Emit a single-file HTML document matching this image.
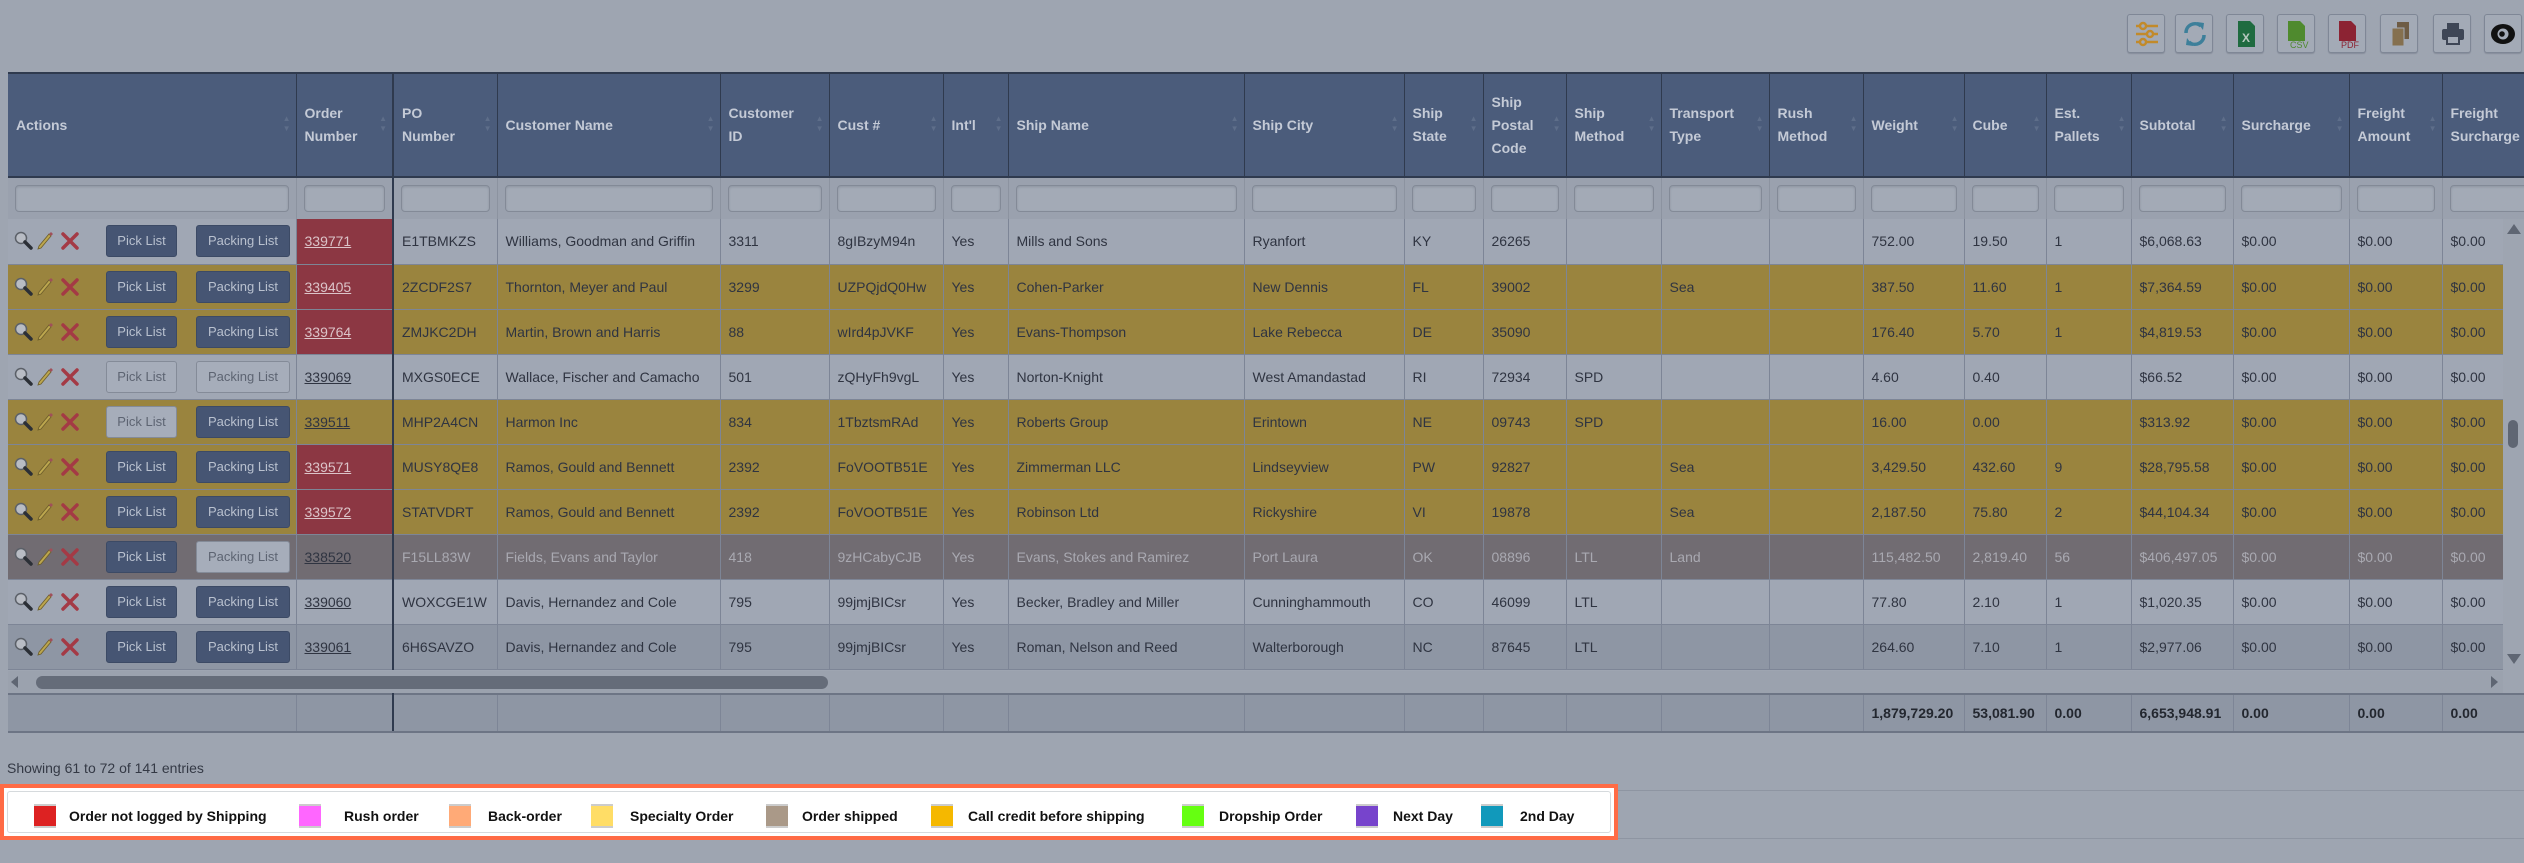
<!DOCTYPE html>
<html><head><meta charset="utf-8">
<style>
*{box-sizing:border-box;margin:0;padding:0}
body{width:2524px;height:863px;background:#9ea5b1;font-family:"Liberation Sans",Arial,sans-serif;position:relative;overflow:hidden;color:#2f3441}
.tb{position:absolute;top:14px;width:38px;height:39px;border:1px solid #7f8796;border-radius:3px;background:#a3aab6;box-shadow:0 1px 1px #868d9a}
.tb svg{position:absolute;left:5px;top:5px}
table{border-collapse:collapse;table-layout:fixed;width:2560px}
th{background:#4b5c7b;color:#c4cad6;font-size:14px;font-weight:bold;text-align:left;padding:0 8px;height:103px;line-height:23px;border-right:1px solid #2f3a4e;border-bottom:2px solid #2f3a4e;position:relative}
th:after{content:"▲\A▼";white-space:pre;position:absolute;right:5px;top:40px;font-size:8px;line-height:10px;color:#5e6e8a}
tr.f td{background:#9aa1ae;height:42px;padding:0 7px;border-right:1px solid #8c93a0}
tr.f td div{height:27px;border:1px solid #838a97;border-radius:4px;background:#a3aab6;box-shadow:inset 0 1px 2px #8d94a1}
tr.r td{height:45px;font-size:14px;padding:0 8px;border-right:1px solid #7d8596;border-bottom:1px solid #7d8596;white-space:nowrap;overflow:hidden}
tr.r td:first-child{padding:0 0 0 6px}
tr.w td{background:#a0a7b4}
tr.y td{background:#9a843e}
tr.g td{background:#716c72;color:#a9a9b1}
tr.d td{background:#8e96a4}
td.red{background:#8c3743!important}
td.red a{color:#dcc4c9}
a{color:#2f3441;text-decoration:underline}
.ic{display:inline-block;vertical-align:middle;width:74px;height:24px}
.btn{display:inline-block;vertical-align:middle;height:32px;line-height:30px;border-radius:3px;background:#465573;color:#b9c1cf;font-size:13px;text-align:center;border:1px solid #3c4a65}
.btn.l{background:#a6adba;color:#5d6472;border-color:#848b98}
.bp{width:71px;margin-left:18px}.bk{width:94px;margin-left:19px}
tr.ft td{background:#8e96a4;height:38px;font-size:14px;font-weight:bold;padding:0 8px;border-right:1px solid #7d8596;border-top:2px solid #6d7585;border-bottom:2px solid #6d7585;color:#23272f}
.c1{border-right:2px solid #2f3a4e!important}
.legend{position:absolute;left:0;top:784px;width:1618px;height:56px;border:4px solid #ff6b45;background:#fff}
.legend .in{position:absolute;left:3px;top:3px;right:3px;bottom:3px;border:1px solid #d6dadd;border-radius:3px}
.li{position:absolute;top:16px;height:24px;font-size:14px;font-weight:bold;color:#111;line-height:24px}
.li i{position:absolute;left:0;top:0;width:22px;height:24px;border-top:2px solid #ccc;border-bottom:2px solid #ccc}
.li span{position:absolute;white-space:nowrap}
</style></head><body>

<div class="tb" style="left:2127px"><svg width="28" height="28"><g stroke="#c28a2a" stroke-width="2.5" fill="none"><line x1="3" y1="6" x2="25" y2="6"/><line x1="3" y1="14" x2="25" y2="14"/><line x1="3" y1="22" x2="25" y2="22"/><circle cx="10" cy="6" r="3" fill="#a3aab6"/><circle cx="17" cy="14" r="3" fill="#a3aab6"/><circle cx="10" cy="22" r="3" fill="#a3aab6"/></g></svg></div>
<div class="tb" style="left:2175px"><svg width="28" height="28"><g stroke="#3d7f9a" stroke-width="3.5" fill="none"><path d="M5 13a9 9 0 0 1 15-7"/><path d="M23 15a9 9 0 0 1-15 7"/></g><path d="M16 2l7 1-1 7z" fill="#3d7f9a"/><path d="M12 26l-7-1 1-7z" fill="#3d7f9a"/></svg></div>
<div class="tb" style="left:2226px"><svg width="28" height="28"><path d="M6 1h12l5 5v21H6z" fill="#1f6b40"/><text x="10" y="22" font-size="12" font-weight="bold" fill="#b8c8c0" font-family="Liberation Sans">X</text></svg></div>
<div class="tb" style="left:2277px"><svg width="28" height="28"><path d="M5 1h12l5 5v15H5z" fill="#4f8a2e"/><text x="7" y="28" font-size="9" fill="#4f8a2e" font-family="Liberation Sans">CSV</text></svg></div>
<div class="tb" style="left:2328px"><svg width="28" height="28"><path d="M5 1h12l5 5v15H5z" fill="#8c2333"/><text x="7" y="28" font-size="9" fill="#8c2333" font-family="Liberation Sans">PDF</text></svg></div>
<div class="tb" style="left:2380px"><svg width="28" height="28"><rect x="11" y="2" width="12" height="17" fill="#6e5c45"/><rect x="6" y="8" width="12" height="18" fill="#85704f" stroke="#a3aab6"/></svg></div>
<div class="tb" style="left:2433px"><svg width="28" height="28"><rect x="8" y="3" width="12" height="6" fill="#3e4656"/><rect x="3" y="9" width="22" height="11" rx="2" fill="#3e4656"/><rect x="8" y="16" width="12" height="8" fill="#a3aab6" stroke="#3e4656" stroke-width="2"/></svg></div>
<div class="tb" style="left:2484px"><svg width="28" height="28"><ellipse cx="13" cy="14" rx="12" ry="10" fill="#111"/><circle cx="13" cy="14" r="5.5" fill="#a3aab6"/><circle cx="12" cy="14" r="2.8" fill="#111"/></svg></div>

<div style="position:absolute;left:8px;top:72px;width:2516px;height:147px;overflow:hidden;border-top:2px solid #2f3a4e">
<table>
<colgroup><col style="width:288px"><col style="width:97px"><col style="width:104px"><col style="width:223px"><col style="width:109px"><col style="width:114px"><col style="width:65px"><col style="width:236px"><col style="width:160px"><col style="width:79px"><col style="width:83px"><col style="width:95px"><col style="width:108px"><col style="width:94px"><col style="width:101px"><col style="width:82px"><col style="width:85px"><col style="width:102px"><col style="width:116px"><col style="width:93px"><col style="width:130px"></colgroup>
<tr><th>Actions</th><th class="c1">Order<br>Number</th><th>PO<br>Number</th><th>Customer Name</th><th>Customer<br>ID</th><th>Cust #</th><th>Int'l</th><th>Ship Name</th><th>Ship City</th><th>Ship<br>State</th><th>Ship<br>Postal<br>Code</th><th>Ship<br>Method</th><th>Transport<br>Type</th><th>Rush<br>Method</th><th>Weight</th><th>Cube</th><th>Est.<br>Pallets</th><th>Subtotal</th><th>Surcharge</th><th>Freight<br>Amount</th><th>Freight<br>Surcharge</th></tr>
<tr class="f"><td><div></div></td><td class="c1"><div></div></td><td><div></div></td><td><div></div></td><td><div></div></td><td><div></div></td><td><div></div></td><td><div></div></td><td><div></div></td><td><div></div></td><td><div></div></td><td><div></div></td><td><div></div></td><td><div></div></td><td><div></div></td><td><div></div></td><td><div></div></td><td><div></div></td><td><div></div></td><td><div></div></td><td><div></div></td></tr>
</table>
</div>

<svg width="0" height="0" style="position:absolute"><defs><g id="icn"><circle cx="7" cy="9" r="5.5" fill="#b8bcc4" stroke="#5b6068" stroke-width="1.5"/><line x1="11" y1="13" x2="17" y2="19" stroke="#2b2f36" stroke-width="3.5" stroke-linecap="round"/><path d="M24 20l3-1 10-12-2-2-10 12z" fill="#bca64e" stroke="#6c5d2a" stroke-width="0.8"/><path d="M35 5l2-2 2 2-2 2z" fill="#a0505a"/><path d="M49 5l14 14M63 5L49 19" stroke="#a43a45" stroke-width="3.5" stroke-linecap="round"/></g></defs></svg>

<div style="position:absolute;left:8px;top:219px;width:2495px;height:452px;overflow:hidden">
<table>
<colgroup><col style="width:288px"><col style="width:97px"><col style="width:104px"><col style="width:223px"><col style="width:109px"><col style="width:114px"><col style="width:65px"><col style="width:236px"><col style="width:160px"><col style="width:79px"><col style="width:83px"><col style="width:95px"><col style="width:108px"><col style="width:94px"><col style="width:101px"><col style="width:82px"><col style="width:85px"><col style="width:102px"><col style="width:116px"><col style="width:93px"><col style="width:130px"></colgroup>
<tr class="r w"><td><svg class="ic"><use href="#icn"/></svg><span class="btn bp">Pick List</span><span class="btn bk">Packing List</span></td><td class="c1 red"><a>339771</a></td><td>E1TBMKZS</td><td>Williams, Goodman and Griffin</td><td>3311</td><td>8gIBzyM94n</td><td>Yes</td><td>Mills and Sons</td><td>Ryanfort</td><td>KY</td><td>26265</td><td></td><td></td><td></td><td>752.00</td><td>19.50</td><td>1</td><td>$6,068.63</td><td>$0.00</td><td>$0.00</td><td>$0.00</td></tr>
<tr class="r y"><td><svg class="ic"><use href="#icn"/></svg><span class="btn bp">Pick List</span><span class="btn bk">Packing List</span></td><td class="c1 red"><a>339405</a></td><td>2ZCDF2S7</td><td>Thornton, Meyer and Paul</td><td>3299</td><td>UZPQjdQ0Hw</td><td>Yes</td><td>Cohen-Parker</td><td>New Dennis</td><td>FL</td><td>39002</td><td></td><td>Sea</td><td></td><td>387.50</td><td>11.60</td><td>1</td><td>$7,364.59</td><td>$0.00</td><td>$0.00</td><td>$0.00</td></tr>
<tr class="r y"><td><svg class="ic"><use href="#icn"/></svg><span class="btn bp">Pick List</span><span class="btn bk">Packing List</span></td><td class="c1 red"><a>339764</a></td><td>ZMJKC2DH</td><td>Martin, Brown and Harris</td><td>88</td><td>wIrd4pJVKF</td><td>Yes</td><td>Evans-Thompson</td><td>Lake Rebecca</td><td>DE</td><td>35090</td><td></td><td></td><td></td><td>176.40</td><td>5.70</td><td>1</td><td>$4,819.53</td><td>$0.00</td><td>$0.00</td><td>$0.00</td></tr>
<tr class="r w"><td><svg class="ic"><use href="#icn"/></svg><span class="btn bp l">Pick List</span><span class="btn bk l">Packing List</span></td><td class="c1"><a>339069</a></td><td>MXGS0ECE</td><td>Wallace, Fischer and Camacho</td><td>501</td><td>zQHyFh9vgL</td><td>Yes</td><td>Norton-Knight</td><td>West Amandastad</td><td>RI</td><td>72934</td><td>SPD</td><td></td><td></td><td>4.60</td><td>0.40</td><td></td><td>$66.52</td><td>$0.00</td><td>$0.00</td><td>$0.00</td></tr>
<tr class="r y"><td><svg class="ic"><use href="#icn"/></svg><span class="btn bp l">Pick List</span><span class="btn bk">Packing List</span></td><td class="c1"><a>339511</a></td><td>MHP2A4CN</td><td>Harmon Inc</td><td>834</td><td>1TbztsmRAd</td><td>Yes</td><td>Roberts Group</td><td>Erintown</td><td>NE</td><td>09743</td><td>SPD</td><td></td><td></td><td>16.00</td><td>0.00</td><td></td><td>$313.92</td><td>$0.00</td><td>$0.00</td><td>$0.00</td></tr>
<tr class="r y"><td><svg class="ic"><use href="#icn"/></svg><span class="btn bp">Pick List</span><span class="btn bk">Packing List</span></td><td class="c1 red"><a>339571</a></td><td>MUSY8QE8</td><td>Ramos, Gould and Bennett</td><td>2392</td><td>FoVOOTB51E</td><td>Yes</td><td>Zimmerman LLC</td><td>Lindseyview</td><td>PW</td><td>92827</td><td></td><td>Sea</td><td></td><td>3,429.50</td><td>432.60</td><td>9</td><td>$28,795.58</td><td>$0.00</td><td>$0.00</td><td>$0.00</td></tr>
<tr class="r y"><td><svg class="ic"><use href="#icn"/></svg><span class="btn bp">Pick List</span><span class="btn bk">Packing List</span></td><td class="c1 red"><a>339572</a></td><td>STATVDRT</td><td>Ramos, Gould and Bennett</td><td>2392</td><td>FoVOOTB51E</td><td>Yes</td><td>Robinson Ltd</td><td>Rickyshire</td><td>VI</td><td>19878</td><td></td><td>Sea</td><td></td><td>2,187.50</td><td>75.80</td><td>2</td><td>$44,104.34</td><td>$0.00</td><td>$0.00</td><td>$0.00</td></tr>
<tr class="r g"><td><svg class="ic"><use href="#icn"/></svg><span class="btn bp">Pick List</span><span class="btn bk l">Packing List</span></td><td class="c1"><a>338520</a></td><td>F15LL83W</td><td>Fields, Evans and Taylor</td><td>418</td><td>9zHCabyCJB</td><td>Yes</td><td>Evans, Stokes and Ramirez</td><td>Port Laura</td><td>OK</td><td>08896</td><td>LTL</td><td>Land</td><td></td><td>115,482.50</td><td>2,819.40</td><td>56</td><td>$406,497.05</td><td>$0.00</td><td>$0.00</td><td>$0.00</td></tr>
<tr class="r w"><td><svg class="ic"><use href="#icn"/></svg><span class="btn bp">Pick List</span><span class="btn bk">Packing List</span></td><td class="c1"><a>339060</a></td><td>WOXCGE1W</td><td>Davis, Hernandez and Cole</td><td>795</td><td>99jmjBICsr</td><td>Yes</td><td>Becker, Bradley and Miller</td><td>Cunninghammouth</td><td>CO</td><td>46099</td><td>LTL</td><td></td><td></td><td>77.80</td><td>2.10</td><td>1</td><td>$1,020.35</td><td>$0.00</td><td>$0.00</td><td>$0.00</td></tr>
<tr class="r d"><td><svg class="ic"><use href="#icn"/></svg><span class="btn bp">Pick List</span><span class="btn bk">Packing List</span></td><td class="c1"><a>339061</a></td><td>6H6SAVZO</td><td>Davis, Hernandez and Cole</td><td>795</td><td>99jmjBICsr</td><td>Yes</td><td>Roman, Nelson and Reed</td><td>Walterborough</td><td>NC</td><td>87645</td><td>LTL</td><td></td><td></td><td>264.60</td><td>7.10</td><td>1</td><td>$2,977.06</td><td>$0.00</td><td>$0.00</td><td>$0.00</td></tr>
</table>
</div>

<div style="position:absolute;left:2503px;top:219px;width:21px;height:452px;background:#9ea5b1"></div>
<div style="position:absolute;left:2507px;top:224px;width:0;height:0;border-left:7px solid transparent;border-right:7px solid transparent;border-bottom:10px solid #5f6673"></div>
<div style="position:absolute;left:2508px;top:420px;width:10px;height:28px;border-radius:5px;background:#5f6673"></div>
<div style="position:absolute;left:2507px;top:654px;width:0;height:0;border-left:7px solid transparent;border-right:7px solid transparent;border-top:10px solid #5f6673"></div>
<div style="position:absolute;left:8px;top:671px;width:2495px;height:22px;background:#9ba2ae"></div>
<div style="position:absolute;left:11px;top:676px;width:0;height:0;border-top:6px solid transparent;border-bottom:6px solid transparent;border-right:7px solid #5f6673"></div>
<div style="position:absolute;left:36px;top:676px;width:792px;height:13px;border-radius:7px;background:#656c79"></div>
<div style="position:absolute;left:2491px;top:676px;width:0;height:0;border-top:6px solid transparent;border-bottom:6px solid transparent;border-left:7px solid #5f6673"></div>

<div style="position:absolute;left:8px;top:693px;width:2516px;height:42px;overflow:hidden">
<table>
<colgroup><col style="width:288px"><col style="width:97px"><col style="width:104px"><col style="width:223px"><col style="width:109px"><col style="width:114px"><col style="width:65px"><col style="width:236px"><col style="width:160px"><col style="width:79px"><col style="width:83px"><col style="width:95px"><col style="width:108px"><col style="width:94px"><col style="width:101px"><col style="width:82px"><col style="width:85px"><col style="width:102px"><col style="width:116px"><col style="width:93px"><col style="width:130px"></colgroup>
<tr class="ft"><td></td><td class="c1"></td><td></td><td></td><td></td><td></td><td></td><td></td><td></td><td></td><td></td><td></td><td></td><td></td><td>1,879,729.20</td><td>53,081.90</td><td>0.00</td><td>6,653,948.91</td><td>0.00</td><td>0.00</td><td>0.00</td></tr>
</table>
</div>

<div style="position:absolute;left:7px;top:760px;font-size:14px;color:#343945">Showing 61 to 72 of 141 entries</div>
<div style="position:absolute;left:0;top:790px;width:2524px;height:1px;background:#8e95a2"></div>
<div style="position:absolute;left:0;top:838px;width:2524px;height:1px;background:#8e95a2"></div>

<div class="legend"><div class="in"></div>
<div class="li" style="left:30px"><i style="background:#dd2222"></i><span style="left:35px">Order not logged by Shipping</span></div>
<div class="li" style="left:295px"><i style="background:#ff66ff"></i><span style="left:45px">Rush order</span></div>
<div class="li" style="left:445px"><i style="background:#ffaa77"></i><span style="left:39px">Back-order</span></div>
<div class="li" style="left:587px"><i style="background:#ffdd66"></i><span style="left:39px">Specialty Order</span></div>
<div class="li" style="left:762px"><i style="background:#aa9988"></i><span style="left:36px">Order shipped</span></div>
<div class="li" style="left:927px"><i style="background:#f5b800"></i><span style="left:37px">Call credit before shipping</span></div>
<div class="li" style="left:1178px"><i style="background:#66ff11"></i><span style="left:37px">Dropship Order</span></div>
<div class="li" style="left:1352px"><i style="background:#7744cc"></i><span style="left:37px">Next Day</span></div>
<div class="li" style="left:1477px"><i style="background:#1199bb"></i><span style="left:39px">2nd Day</span></div>
</div>
</body></html>
